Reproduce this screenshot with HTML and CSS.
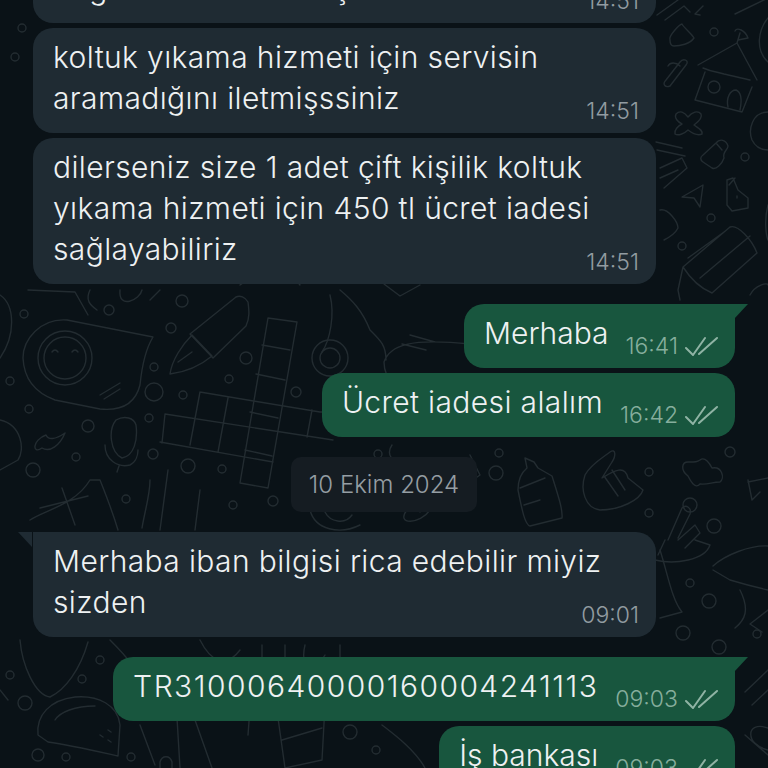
FILE: index.html
```html
<!DOCTYPE html>
<html lang="tr">
<head>
<meta charset="utf-8">
<title>Sohbet</title>
<link rel="stylesheet" href="styles.css">
</head>
<body>
<main class="chat">
  <svg class="doodles" viewBox="0 0 768 768" aria-hidden="true">
    <!-- smiley blob -->
    <path d="M153 337L67 320C40 318 23 340 23 358C24 380 36 393 55 400L100 409C120 411 135 405 140 385C142 365 145 350 153 337Z"/>
    <circle cx="65" cy="358" r="27"/><circle cx="65" cy="358" r="21"/>
    <path d="M52 352q3-4 6 0M72 352q3-4 6 0M100 395l20-12M104 399l16-10"/>
    <!-- pen nib -->
    <path d="M170 374C172 360 182 345 192 335L212 356C200 366 186 372 170 374ZM190 334L236 297C240 295 245 297 248 302C249 310 250 318 246 326L213 358ZM178 362L192 352"/>
    <!-- crossword -->
    <path d="M268 318L297 322L268 488L240 483ZM262 345L290 350M256 374L285 380M250 412L278 418M245 450L272 456"/>
    <path d="M200 392L320 412L322 412M200 392L190 445M165 414L162 443M165 414L333 440M228 398L218 452M160 442L273 462M312 410L307 437"/>
    <!-- left shapes -->
    <path d="M0 295C15 305 16 335 0 358M0 420C22 425 25 450 18 460L0 470M46 435C32 440 32 455 42 448C50 453 60 445 65 433C55 440 48 440 46 435ZM116 420C108 430 110 452 122 458C134 456 138 440 136 425C134 418 125 415 116 420ZM105 445C105 460 118 468 130 465C136 462 138 455 138 450M119 466L117 472"/>
    <path d="M30 520C45 510 75 505 90 480L100 480C108 500 115 520 118 530M62 488L75 525M40 508L88 496"/>
    <path d="M150 480C150 495 145 510 142 528M168 470L160 530M200 490L195 530"/>
    <path d="M20 640C22 665 35 695 50 697C65 690 80 670 88 642M0 690L8 700M110 640C125 655 140 670 140 690"/>
    <!-- taco -->
    <path d="M38 735C36 715 50 700 75 697C98 695 118 705 120 725L118 756C100 752 70 745 48 742Z"/>
    <path d="M55 720C60 712 75 706 95 706M100 735l3 2M108 740l3 2M108 730l3 2"/>
    <!-- lower icons -->
    <path d="M140 725L155 765M177 718L180 768M195 720L212 768M212 720C235 715 245 712 250 708L248 735M278 718L325 705L322 760L285 768ZM282 740L322 728M382 725C395 735 415 750 425 768"/>
    <path d="M160 768V762C162 755 170 755 172 762V768"/>
    <path d="M200 640C210 660 225 670 240 650M262 645V680M285 645V680M305 645C300 665 310 680 325 655M340 645V665"/>
    <!-- bottle, hand -->
    <path d="M525 458L534 462L538 468L552 476C558 495 563 510 562 518L530 526C525 525 522 510 518 490C518 480 522 472 527 468ZM520 488L545 478M524 505L540 500"/>
    <path d="M610 452C616 448 616 456 612 462L602 478C615 470 625 465 628 478L643 490C640 500 620 510 600 510C585 508 580 490 585 475C590 465 602 458 610 452ZM612 470L625 490M604 476L618 496"/>
    <path d="M392 445C385 455 395 465 400 460M310 510C315 530 340 535 360 525M325 512C330 522 345 525 352 515M470 455L480 475L470 482M438 460C450 470 448 490 438 495M407 510C395 525 420 525 430 510"/>
    <!-- cloud right -->
    <path d="M688 476C680 470 682 462 688 462C696 462 697 462 700 460C705 456 710 464 712 468C722 466 725 478 720 482C712 482 708 485 700 484C695 490 690 480 688 476Z"/>
    <path d="M748 480L752 500L760 492M748 482L768 478"/>
    <!-- rock hand lower right -->
    <path d="M668 540L682 508C686 504 692 508 690 514L678 538M678 540L695 525L700 533L685 548M655 560C675 565 705 560 710 545L695 540M658 555L665 540"/>
    <path d="M713 566C725 555 750 545 768 546M713 570L730 580C750 586 768 590 768 590M768 610L750 624L762 632M740 590C750 610 745 620 735 628"/>
    <path d="M660 550C668 575 672 600 682 612L660 618"/>
    <path d="M745 692L768 670M752 705L768 690M768 750C745 745 745 720 768 728M768 755L745 735"/>
    <!-- house -->
    <path d="M698 65L737 43L757 80M737 43L740 33M735 31C737 27 745 30 748 38L738 40"/>
    <path d="M705 72L695 100L742 112L752 87M703 68C712 72 718 72 724 74C732 76 742 78 750 80"/>
    <circle cx="714" cy="87" r="6"/>
    <path d="M728 107C726 98 730 90 736 90C741 92 742 100 740 110"/>
    <!-- right top -->
    <path d="M657 15L678 0M665 20L684 6L690 12M703 6L695 14L700 15M735 14L768 -2"/>
    <path d="M670 40C668 36 680 24 682 24C684 28 692 34 694 38C690 44 680 46 674 46C671 46 670 43 670 40Z"/>
    <path d="M666 80L680 62C683 58 690 60 686 65L670 86C665 88 662 84 666 80ZM668 66C670 62 676 62 680 66"/>
    <path d="M768 18C758 30 755 50 768 62M768 112C752 112 748 130 752 140C756 148 762 150 768 150"/>
    <!-- X -->
    <path d="M676 114C680 110 684 112 688 117C692 112 698 110 701 114C703 118 698 122 694 125C698 128 703 130 702 134C698 136 692 133 688 130C684 134 678 136 675 134C674 130 678 126 682 124C678 122 674 118 676 114Z"/>
    <!-- bag -->
    <path d="M703 155L716 143C720 138 726 140 728 146C728 150 722 152 724 158C722 164 716 170 712 168L703 162C700 160 700 157 703 155ZM716 143L722 150"/>
    <!-- lock -->
    <path d="M727 180L733 178L738 190L748 198L748 208L732 211L727 205ZM735 178L729 185M737 196l0 2"/>
    <!-- brush box -->
    <path d="M656 142L682 148M657 150L685 156M660 168L682 158L687 168L664 188M660 178L678 170"/>
    <path d="M682 197L703 185L700 207L694 198Z"/>
    <path d="M660 210C668 208 678 222 678 228C675 234 668 238 664 240"/>
    <!-- cushion -->
    <path d="M683 267L730 227C738 224 752 240 757 253L712 293C700 288 690 278 683 267ZM688 258L724 232M700 278L750 236M683 267L678 290L680 300"/>
    <path d="M768 205C764 220 766 235 768 240M750 295C755 285 768 282 768 285"/>
    <!-- middle top -->
    <path d="M340 290C352 300 362 310 370 330C380 340 386 345 386 360M384 362C390 345 410 338 470 344M410 335L435 342M402 344L426 350M384 362C384 380 400 395 418 398M384 284L400 296L420 285"/>
    <path d="M120 290C118 310 140 300 142 290M160 290L150 300M90 290C85 300 90 305 97 310"/>
    <path d="M28 290L75 292L88 315M240 285C260 270 290 270 300 285"/>
    <path d="M330 295C335 315 330 340 322 352"/>
    <circle cx="330" cy="358" r="18"/><circle cx="330" cy="358" r="10"/>
    <path d="M395 460C398 490 395 505 385 510M418 460L420 512"/>
    <!-- small circles -->
    <g class="dots">
      <circle cx="22" cy="28" r="4"/><circle cx="15" cy="57" r="4"/><circle cx="24" cy="314" r="4"/>
      <circle cx="109" cy="310" r="5"/><circle cx="171" cy="328" r="5"/><circle cx="182" cy="301" r="6"/>
      <circle cx="246" cy="358" r="6"/><circle cx="154" cy="367" r="4"/><circle cx="229" cy="379" r="4"/>
      <circle cx="183" cy="395" r="4"/><circle cx="154" cy="392" r="9"/><circle cx="296" cy="392" r="5"/>
      <circle cx="10" cy="381" r="4"/><circle cx="29" cy="409" r="4"/><circle cx="88" cy="426" r="6"/>
      <circle cx="149" cy="418" r="4"/><circle cx="76" cy="457" r="4"/><circle cx="153" cy="454" r="5"/>
      <circle cx="33" cy="470" r="7"/><circle cx="188" cy="466" r="7"/><circle cx="222" cy="469" r="4"/>
      <circle cx="126" cy="499" r="4"/><circle cx="233" cy="505" r="4"/><circle cx="273" cy="501" r="5"/>
      <circle cx="378" cy="454" r="4"/><circle cx="499" cy="453" r="4"/><circle cx="496" cy="473" r="7"/>
      <circle cx="649" cy="472" r="4"/><circle cx="649" cy="513" r="4"/><circle cx="730" cy="452" r="5"/>
      <circle cx="714" cy="526" r="7"/><circle cx="690" cy="505" r="7"/><circle cx="690" cy="583" r="4"/>
      <circle cx="709" cy="601" r="7"/><circle cx="683" cy="633" r="7"/><circle cx="719" cy="647" r="7"/>
      <circle cx="100" cy="660" r="4"/><circle cx="10" cy="675" r="4"/><circle cx="25" cy="703" r="7"/>
      <circle cx="82" cy="679" r="4"/><circle cx="38" cy="755" r="6"/><circle cx="66" cy="757" r="4"/>
      <circle cx="131" cy="757" r="4"/><circle cx="350" cy="732" r="7"/><circle cx="376" cy="750" r="4"/>
      <circle cx="714" cy="32" r="4"/><circle cx="745" cy="157" r="4"/><circle cx="711" cy="218" r="4"/>
      <circle cx="682" cy="246" r="4"/><circle cx="757" cy="634" r="4"/>
    </g>
  </svg>

  <section class="thread">
    <div class="bubble in first">
      <p class="text">Sağlanan hizmet başına</p>
      <span class="meta"><span class="time">14:51</span></span>
    </div>
    <div class="bubble in">
      <p class="text">koltuk yıkama hizmeti için servisin<br>aramadığını iletmişssiniz</p>
      <span class="meta"><span class="time">14:51</span></span>
    </div>
    <div class="bubble in">
      <p class="text">dilerseniz size 1 adet çift kişilik koltuk<br>yıkama hizmeti için 450 tl ücret iadesi<br>sağlayabiliriz</p>
      <span class="meta"><span class="time">14:51</span></span>
    </div>
    <div class="bubble out tail group-start">
      <p class="text tight">Merhaba</p>
      <span class="meta"><span class="time">16:41</span>
        <svg class="ticks" viewBox="0 0 36 20"><path d="M2 12L9 19L21 2M15 18L33 2"/></svg>
      </span>
    </div>
    <div class="bubble out">
      <p class="text">Ücret iadesi alalım</p>
      <span class="meta"><span class="time">16:42</span>
        <svg class="ticks" viewBox="0 0 36 20"><path d="M2 12L9 19L21 2M15 18L33 2"/></svg>
      </span>
    </div>
    <div class="date">10 Ekim 2024</div>
    <div class="bubble in tail">
      <p class="text">Merhaba iban bilgisi rica edebilir miyiz<br>sizden</p>
      <span class="meta"><span class="time">09:01</span></span>
    </div>
    <div class="bubble out tail group-start">
      <p class="text iban">TR31000640000160004241113</p>
      <span class="meta"><span class="time">09:03</span>
        <svg class="ticks" viewBox="0 0 36 20"><path d="M2 12L9 19L21 2M15 18L33 2"/></svg>
      </span>
    </div>
    <div class="bubble out">
      <p class="text tight">İş bankası</p>
      <span class="meta"><span class="time">09:03</span>
        <svg class="ticks" viewBox="0 0 36 20"><path d="M2 12L9 19L21 2M15 18L33 2"/></svg>
      </span>
    </div>
  </section>
</main>
</body>
</html>
```

FILE: styles.css
```css
* { box-sizing: border-box; }
html, body { margin: 0; padding: 0; }
body { background: #0a1217; font-family: Inter, Roboto, sans-serif; }

.chat {
  position: relative;
  width: 768px;
  height: 768px;
  overflow: hidden;
  background: #0a1217;
}

.doodles {
  position: absolute;
  inset: 0;
  width: 768px;
  height: 768px;
  fill: none;
  stroke: #232c31;
  stroke-width: 1.4;
  stroke-linecap: round;
  stroke-linejoin: round;
  filter: blur(0.4px);
}

.thread {
  position: relative;
  display: flex;
  flex-direction: column;
  gap: 5px;
  padding: 0 33px;
}

.bubble {
  position: relative;
  border-radius: 20px;
  padding: 9px 15px 14px 20px;
}

/* Incoming: the time shares the grid cell with the text, on its last line */
.bubble.in {
  display: grid;
  width: 623px;
  align-self: flex-start;
  background: #1f2b33;
  padding-right: 17px;
}

.bubble.in > * { grid-area: 1 / 1; }
.bubble.in .meta { justify-self: end; align-self: end; }

.bubble.first { margin-top: -41px; }

.bubble.out {
  display: flex;
  align-items: flex-end;
  align-self: flex-end;
  background: #18563e;
  gap: 17px;
}

.group-start { margin-top: 15px; }

.bubble.in.tail { border-top-left-radius: 0; }
.bubble.out.tail { border-top-right-radius: 0; }

.bubble.tail::after {
  content: "";
  position: absolute;
  top: 0;
  width: 14px;
  height: 15px;
}
.bubble.in.tail::after {
  left: -15px;
  background: #1f2b33;
  clip-path: polygon(0 0, 100% 0, 100% 100%);
}
.bubble.out.tail::after {
  right: -13px;
  background: #18563e;
  clip-path: polygon(0 0, 100% 0, 0 100%);
}

.text {
  margin: 0;
  font-size: 30px;
  line-height: 41px;
  letter-spacing: 0.38px;
  font-weight: 300;
  color: #eef1f2;
  white-space: nowrap;
}

.text.iban { letter-spacing: 1.45px; }
.text.tight { letter-spacing: 0; }

.meta {
  display: flex;
  align-items: center;
  gap: 6px;
  margin-bottom: -6px;
  font-size: 23px;
  font-weight: 300;
  line-height: 28px;
}

.in .time { color: #929ca1; }
.out .time { color: #86ae9d; }

.ticks {
  width: 36px;
  height: 20px;
  fill: none;
  stroke: #8fb3a4;
  stroke-width: 2;
  stroke-linecap: round;
  stroke-linejoin: round;
}

.date {
  align-self: center;
  margin: 15px 0;
  padding: 0 18px;
  height: 55px;
  display: flex;
  align-items: center;
  border-radius: 10px;
  background: #151c22;
  color: #959ea3;
  font-size: 24px;
  font-weight: 300;
}
```
